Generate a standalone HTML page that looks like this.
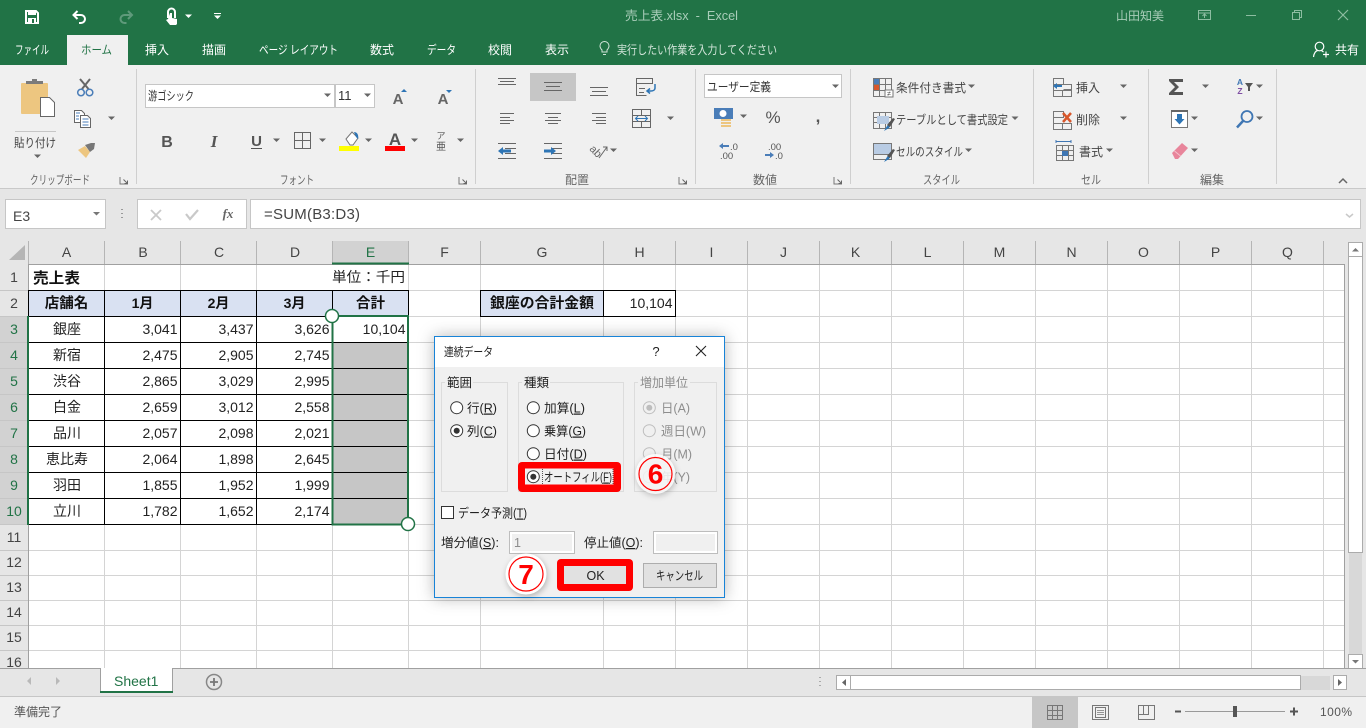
<!DOCTYPE html>
<html lang="ja"><head><meta charset="utf-8"><title>売上表.xlsx - Excel</title>
<style>
html,body{margin:0;padding:0;width:1366px;height:728px;overflow:hidden;background:#f0f0f0}
svg{position:absolute;left:0;top:0;display:block}
text{white-space:pre}
.r{fill:#444;font-size:12px}
.g{fill:#666;font-size:12px}
.w{fill:#fff;font-size:12px}
.c{fill:#222;font-size:14px}
.b{font-weight:bold;fill:#111}
.h{fill:#444;font-size:14px;text-anchor:middle}
.n{text-anchor:end}
.m{text-anchor:middle}
.s{fill:#217346}
.d{fill:#222;font-size:12.500px}
.x{fill:#8d8d8d;font-size:12.500px}
</style></head><body>
<svg width="1366" height="728" viewBox="0 0 1366 728" font-family='"Liberation Sans","Noto Sans CJK JP",sans-serif'>
<defs>
<path id="t" d="M-3.5 -1.5h7l-3.5 3.5z" fill="#666"/>
<g id="l" fill="none" stroke="#777"><path d="M-4.5 -3.5h-0V3.500h8"/><path d="M-1 -1L3 3M3 0V3H0" stroke="#666"/></g>
</defs>

<!-- title & tabs -->
<rect width="1366" height="65" fill="#217346"/>
<rect y="65" width="1366" height="123" fill="#f0f0f0"/>
<rect x="67" y="35" width="61" height="30" fill="#f0f0f0"/>
<!-- QAT -->
<path d="M26 11h10l2 2v10H26z" fill="none" stroke="#fff" stroke-width="2"/><rect x="28" y="11" width="8" height="4" fill="#fff"/><rect x="28" y="18" width="8" height="5" fill="#fff"/><rect x="32" y="19" width="2" height="4" fill="#217346"/>
<path d="M73.500 15H81a4 4 0 0 1 0 8h-2M77.500 11l-4 4 4 4" fill="none" stroke="#fff" stroke-width="2"/>
<path d="M132 15h-7.500a4 4 0 0 0 0 8h2M128 11l4 4-4 4" fill="none" stroke="#5f9a7b" stroke-width="2"/>
<path d="M168 18v-6a3.500 3.500 0 0 1 7 0v6" fill="none" stroke="#fff" stroke-width="2"/><path d="M170 13h2v5l5 1v5l-1 1h-6l-4-5 2-1z" fill="#fff"/>
<path d="M185 14.500h7l-3.500 3.500z" fill="#fff"/>
<path d="M214 13h7v1h-7zM214 15.500h7l-3.500 3.500z" fill="#fff"/>
<text x="625" y="20" fill="#a9cdb9" font-size="12.500" textLength="113" lengthAdjust="spacingAndGlyphs">売上表.xlsx  -  Excel</text>
<text x="1116" y="20" fill="#a9cdb9" font-size="12" textLength="48" lengthAdjust="spacingAndGlyphs">山田知美</text>
<g fill="none" stroke="#8dbda1">
<rect x="1198.500" y="10.500" width="12" height="9"/><path d="M1198 13h13M1204.500 18v-4M1202.500 16l2-2 2 2"/>
<path d="M1246 15.500h10"/>
<path d="M1292.500 12.500h7v7h-7zM1294.500 12.500v-2h7v7h-2"/>
<path d="M1338 10l10 10M1348 10l-10 10" stroke-width="1.200"/>
</g>
<g class="w">
<text class="w" x="15" y="54" textLength="34" lengthAdjust="spacingAndGlyphs">ファイル</text>
<text x="81" y="54" font-size="12" fill="#217346" textLength="31" lengthAdjust="spacingAndGlyphs">ホーム</text>
<text class="w" x="145" y="54">挿入</text>
<text class="w" x="202" y="54">描画</text>
<text class="w" x="259" y="54" textLength="79" lengthAdjust="spacingAndGlyphs">ページ レイアウト</text>
<text class="w" x="370" y="54">数式</text>
<text class="w" x="427" y="54" textLength="29" lengthAdjust="spacingAndGlyphs">データ</text>
<text class="w" x="488" y="54">校閲</text>
<text class="w" x="545" y="54">表示</text>
<text x="617" y="54" font-size="12" fill="#d3e5da" textLength="160" lengthAdjust="spacingAndGlyphs">実行したい作業を入力してください</text>
<text class="w" x="1335" y="54">共有</text>
</g>
<path d="M602 52v-2c-1-1-2-2-2-4a4.500 4.500 0 0 1 9 0c0 2-1 3-2 4v2zM603 54.500h3" fill="none" stroke="#d3e5da"/>
<circle cx="1319.500" cy="46.500" r="4.300" fill="none" stroke="#fff" stroke-width="1.200"/><path d="M1313.500 57c.5-4 2.500-6 4-6.500M1321.500 50.500l2 1.500M1326 51.500v6M1323 54.500h6" fill="none" stroke="#fff" stroke-width="1.200"/>

<!-- ribbon separators -->
<g stroke="#cfcfcf"><path d="M136.500 69v115M475.500 69v115M695.500 69v115M850.500 69v115M1033.500 69v115M1148.500 69v115M1276.500 69v115"/></g>
<g>
<text class="g" x="30" y="184" textLength="60" lengthAdjust="spacingAndGlyphs">クリップボード</text>
<text class="g" x="280" y="184" textLength="34" lengthAdjust="spacingAndGlyphs">フォント</text>
<text class="g" x="565" y="184">配置</text>
<text class="g" x="753" y="184">数値</text>
<text class="g" x="923" y="184" textLength="37" lengthAdjust="spacingAndGlyphs">スタイル</text>
<text class="g" x="1081" y="184" textLength="20" lengthAdjust="spacingAndGlyphs">セル</text>
<text class="g" x="1200" y="184">編集</text>
</g>
<use href="#l" x="124.500" y="180.500"/><use href="#l" x="463.500" y="180.500"/><use href="#l" x="683.500" y="180.500"/><use href="#l" x="838.500" y="180.500"/>
<path d="M1339 183l4-4 4 4" fill="none" stroke="#666" stroke-width="1.500"/>

<!-- clipboard -->
<rect x="21" y="83" width="27" height="31" rx="1" fill="#edc680"/>
<path d="M26 84v-3h6v-2h5v2h6v3z" fill="#7b7b7b"/>
<path d="M40.500 97.500h9l5 5v14h-14z" fill="#fff" stroke="#666"/>
<path d="M15 131.500h41" stroke="#c6c6c6"/>
<text class="r" x="14" y="147" textLength="42" lengthAdjust="spacingAndGlyphs">貼り付け</text>
<use href="#t" x="37.500" y="156"/>
<path d="M80 79l8.500 10M90 79l-8 10" stroke="#666" stroke-width="2" fill="none"/>
<circle cx="81" cy="92.500" r="3.300" fill="none" stroke="#4a7db8" stroke-width="1.500"/><circle cx="89.500" cy="92.500" r="3.300" fill="none" stroke="#4a7db8" stroke-width="1.500"/>
<path d="M74.500 110.500h7l3 3v9h-10z" fill="#fff" stroke="#666"/><path d="M80.500 115.500h7l3 3v9h-10z" fill="#fff" stroke="#666"/>
<path d="M76 113h4M76 116h3M76 119h3M82.500 119h6M82.500 122h6M82.500 125h6" stroke="#4a7db8"/>
<use href="#t" x="111.500" y="118"/>
<path d="M78 150l7-4 5 6-4 6z" fill="#edc680"/><path d="M85 145l6-2 4 0-1 6-4 3z" fill="#777"/>

<!-- font -->
<rect x="145.500" y="84.500" width="189" height="23" fill="#fff" stroke="#c6c6c6"/>
<rect x="335.500" y="84.500" width="39" height="23" fill="#fff" stroke="#c6c6c6"/>
<text x="148" y="100" font-size="12" fill="#333" textLength="46" lengthAdjust="spacingAndGlyphs">游ゴシック</text>
<text x="338" y="100" font-size="13" fill="#333">11</text>
<use href="#t" x="327.500" y="95"/><use href="#t" x="367.500" y="95"/>
<text x="398" y="104" font-size="15" font-weight="bold" fill="#666" text-anchor="middle">A</text><path d="M401 92l3-3 3 3z" fill="#2e75b5"/>
<text x="443" y="104" font-size="15" font-weight="bold" fill="#666" text-anchor="middle">A</text><path d="M446 90h6l-3 3z" fill="#2e75b5"/>
<text x="167" y="147" font-size="16" font-weight="bold" fill="#555" text-anchor="middle">B</text>
<text x="214" y="147" font-size="17" font-weight="bold" font-style="italic" font-family='"Liberation Serif",serif' fill="#555" text-anchor="middle">I</text>
<text x="256.500" y="146" font-size="15" font-weight="bold" fill="#555" text-anchor="middle">U</text><path d="M251 148.500h11" stroke="#555"/>
<use href="#t" x="276.500" y="140"/>
<path d="M294.500 132.500h16v16h-16zM302.500 132.500v16M294.500 140.500h16" fill="none" stroke="#666"/>
<use href="#t" x="322.500" y="140"/>
<path d="M346 139l6-7 6 6-5 7h-3z" fill="#fff" stroke="#777"/><path d="M354 132c3 0 5 3 4 7l-2-2z" fill="#2e75b5"/>
<rect x="339" y="146" width="20" height="5" fill="#ff0"/>
<use href="#t" x="368.500" y="140"/>
<text x="395" y="145" font-size="17" font-weight="bold" fill="#555" text-anchor="middle">A</text>
<rect x="385" y="146" width="20" height="5" fill="#f00"/>
<use href="#t" x="414.500" y="140"/>
<text x="441" y="139" font-size="9" fill="#555" text-anchor="middle">ア</text>
<text x="441" y="150" font-size="10" fill="#555" text-anchor="middle">亜</text>
<use href="#t" x="460.500" y="140"/>

<!-- alignment -->
<rect x="530" y="73" width="46" height="28" fill="#c6c6c6"/>
<g stroke="#666" fill="none">
<path d="M498 78.500h18M500 81.500h14M498 84.500h18"/>
<path d="M544 82.500h18M546 86.500h14M544 90.500h18"/>
<path d="M590 87.500h18M592 91.500h14M590 95.500h18"/>
<path d="M500 113.500h14M500 117.500h10M500 120.500h14M500 123.500h10"/>
<path d="M545 113.500h16M548 117.500h10M545 120.500h16M548 123.500h10"/>
<path d="M592 113.500h14M596 117.500h10M592 120.500h14M596 123.500h10"/>
<path d="M498 143.500h18M505 148.500h11M505 153.500h11M498 158.500h18"/>
<path d="M544 143.500h18M552 148.500h10M552 153.500h10M544 158.500h18"/>
<path d="M636.500 78.500h16v5h-16zM636.500 83.500v12h10M639 88.500h6M639 92.500h5"/>
<path d="M632.500 109.500h18v18h-18zM632.500 115.500h18M632.500 121.500h18M641.500 109.500v6M641.500 121.500v6"/>
</g>
<path d="M655 84v4c0 2-2 3-4 3h-3M650 88.500l-3 2.500 3 2.500" fill="none" stroke="#2e75b5" stroke-width="1.500"/>
<path d="M635.500 118.500h12M638 116l-2.500 2.500 2.500 2.500M645 116l2.500 2.500-2.500 2.500" fill="none" stroke="#2e75b5"/>
<use href="#t" x="670.500" y="118"/>
<path d="M498 151l5-4v2.500h8v3h-8v2.500z" fill="#2e75b5"/>
<path d="M556 151l-5-4v2.500h-7v3h7v2.500z" fill="#2e75b5"/>
<text x="596" y="155" font-size="11" fill="#666" transform="rotate(45 596 151)" text-anchor="middle">ab</text>
<path d="M599 158l8-11M603 147h4v4" fill="none" stroke="#666"/>
<use href="#t" x="613.500" y="150"/>

<!-- number -->
<rect x="704.500" y="74.500" width="137" height="23" fill="#fff" stroke="#c6c6c6"/>
<text x="707" y="91" font-size="12" fill="#333" textLength="64" lengthAdjust="spacingAndGlyphs">ユーザー定義</text>
<use href="#t" x="835.500" y="86"/>
<rect x="714" y="108" width="19" height="11" fill="#4a7db8"/><ellipse cx="723" cy="113.500" rx="3.500" ry="3.500" fill="#fff"/>
<path d="M721 119h10v2h-10zM721 122h10v2h-10zM721 125h10v2h-10z" fill="#edc680"/>
<use href="#t" x="743.500" y="116"/>
<text x="773" y="123" font-size="17" fill="#555" text-anchor="middle">%</text>
<text x="818" y="122" font-size="17" font-weight="bold" fill="#555" text-anchor="middle">,</text>
<text x="730" y="150" font-size="9.500" fill="#555">.0</text><text x="720" y="159" font-size="9.500" fill="#555">.00</text>
<path d="M719 146l4-3v2h6v2h-6v2z" fill="#4a7db8"/>
<text x="768" y="150" font-size="9.500" fill="#555">.00</text><text x="775" y="159" font-size="9.500" fill="#555">.0</text>
<path d="M774 155l-4-3v2h-5v2h5v2z" fill="#4a7db8"/>

<!-- styles -->
<g fill="none" stroke="#777">
<rect x="873.500" y="78.500" width="18" height="18"/><path d="M873.500 84.500h18M873.500 90.500h18M879.500 78.500v18M885.500 78.500v18"/>
<rect x="873.500" y="112.500" width="18" height="16"/><path d="M873.500 117.500h18M873.500 122.500h18M879.500 112.500v16M885.500 112.500v16"/>
<rect x="873.500" y="143.500" width="18" height="16"/><path d="M873.500 148.500h18M873.500 154.500h18"/>
</g>
<rect x="874" y="79" width="5" height="5" fill="#4a7db8"/><rect x="874" y="85" width="5" height="5" fill="#d8572b"/>
<rect x="885" y="90" width="8" height="7" fill="#fff" stroke="#777"/><text x="889" y="96" font-size="7" fill="#444" text-anchor="middle">≠</text>
<rect x="877" y="116" width="12" height="8" fill="#b9cce4"/><path d="M884 131l3-5 6-7 1 1-5 8z" fill="#2e75b5"/><path d="M887 125l6-7 2 1-5 8z" fill="#555"/>
<rect x="874" y="144" width="17" height="10" fill="#b9cce4"/><path d="M884 162l3-5 6-7 1 1-5 8z" fill="#2e75b5"/><path d="M887 156l6-7 2 1-5 8z" fill="#555"/>
<text class="r" x="896" y="92" textLength="70" lengthAdjust="spacingAndGlyphs">条件付き書式</text><use href="#t" x="971.500" y="86"/>
<text class="r" x="896" y="124" textLength="112" lengthAdjust="spacingAndGlyphs">テーブルとして書式設定</text><use href="#t" x="1015" y="118"/>
<text class="r" x="896" y="156" textLength="67" lengthAdjust="spacingAndGlyphs">セルのスタイル</text><use href="#t" x="968.500" y="150"/>

<!-- cells -->
<g fill="none" stroke="#777">
<path d="M1053.500 78.500h10v6h-10zM1053.500 90.500h18v6h-18zM1062.500 90.500v6M1053.500 84.500v6M1063.500 84.500h8v5h-8"/>
<path d="M1053.500 111.500h10v6h-10zM1053.500 123.500h18v6h-18zM1062.500 123.500v6M1053.500 117.500v6"/>
<rect x="1056.500" y="145.500" width="17" height="15"/><path d="M1056.500 150.500h17M1056.500 155.500h17M1062.500 145.500v15M1068.500 145.500v15"/>
</g>
<rect x="1062" y="151" width="6" height="5" fill="#3f76b3"/>
<path d="M1056 141.500h15M1056 140v3M1071 140v3" stroke="#3f76b3" fill="none"/>
<path d="M1053 86l4-3v2h5v2h-5v2z" fill="#2e75b5"/>
<path d="M1063 113l8 9M1071 113l-8 9" stroke="#d8572b" stroke-width="2.500"/>
<text class="r" x="1076" y="92">挿入</text><use href="#t" x="1123.500" y="86"/>
<text class="r" x="1076" y="124">削除</text><use href="#t" x="1123.500" y="118"/>
<text class="r" x="1079" y="156">書式</text><use href="#t" x="1109.500" y="150"/>

<!-- editing -->
<path d="M1169 79h14v3h-9l5 5-5 5h9v3h-14v-2l6-6-6-6z" fill="#555"/>
<use href="#t" x="1205.500" y="86"/>
<text x="1240" y="85" font-size="8.500" font-weight="bold" fill="#3f76b3" text-anchor="middle">A</text>
<text x="1240" y="94" font-size="8.500" font-weight="bold" fill="#7f4fa3" text-anchor="middle">Z</text>
<path d="M1245 83h8l-3 4v4h-2v-4z" fill="#555"/>
<use href="#t" x="1259.500" y="86"/>
<rect x="1171.500" y="110.500" width="16" height="17" fill="#fff" stroke="#777"/><rect x="1171" y="110" width="17" height="2" fill="#666"/>
<path d="M1177 114h5v5h2.500l-5 5.500-5-5.500h2.500z" fill="#2e75b5"/>
<use href="#t" x="1194.500" y="118"/>
<circle cx="1247" cy="116.500" r="5.500" fill="none" stroke="#3f76b3" stroke-width="1.800"/><path d="M1243 121l-6 6.500" stroke="#3f76b3" stroke-width="2.500"/>
<use href="#t" x="1259.500" y="118"/>
<path d="M1172 153l10-10 6 5-10 11h-3z" fill="#e8859b"/><path d="M1174.500 151l6 5" stroke="#f4c2cd"/>
<use href="#t" x="1194.500" y="150"/>

<!-- formula bar -->
<rect y="188" width="1366" height="52" fill="#e6e6e6"/><path d="M0 188.500h1366" stroke="#c9c9c9"/>
<rect x="5.500" y="199.500" width="100" height="29" fill="#fff" stroke="#c6c6c6"/>
<rect x="137.500" y="199.500" width="109" height="29" fill="#fff" stroke="#c6c6c6"/>
<rect x="250.500" y="199.500" width="1110" height="29" fill="#fff" stroke="#c6c6c6"/>
<text x="13" y="221" font-size="14" fill="#444">E3</text>
<path d="M93 212h7l-3.500 3.500z" fill="#777"/>
<path d="M122 209v1M122 213v1M122 217v1" stroke="#999" stroke-width="2"/>
<path d="M151 210l10 10M161 210l-10 10" stroke="#c9c9c9" stroke-width="1.800"/>
<path d="M186 214l4 5 8-9" fill="none" stroke="#c9c9c9" stroke-width="2.200"/>
<text x="228" y="218" font-size="13" font-style="italic" font-weight="bold" font-family='"Liberation Serif",serif' fill="#666" text-anchor="middle">fx</text>
<text x="264" y="219" font-size="15" fill="#444" textLength="96" lengthAdjust="spacing">=SUM(B3:D3)</text>
<path d="M1346 214l3.500 3 3.500-3" fill="none" stroke="#c9c9c9" stroke-width="1.500"/>

<!-- sheet -->
<rect y="240" width="1366" height="428" fill="#e6e6e6"/>
<rect x="28" y="264" width="1316" height="404" fill="#fff"/>
<rect y="316" width="28" height="208" fill="#d2d2d2"/>
<rect x="333" y="241" width="75" height="23" fill="#d2d2d2"/>
<path d="M25 245v15H9z" fill="#b5b5b5"/>
<!-- grid -->
<g stroke="#d4d4d4">
<path d="M104.500 264v404M180.500 264v404M256.500 264v404M332.500 290v378M408.500 264v404M480.500 264v404M603.500 264v404M675.500 264v404M747.500 264v404M819.500 264v404M891.500 264v404M963.500 264v404M1035.500 264v404M1107.500 264v404M1179.500 264v404M1251.500 264v404M1323.500 264v404"/>
<path d="M28 290.500h1316M28 316.500h1316M28 342.500h1316M28 368.500h1316M28 394.500h1316M28 420.500h1316M28 446.500h1316M28 472.500h1316M28 498.500h1316M28 524.500h1316M28 550.500h1316M28 575.500h1316M28 600.500h1316M28 625.500h1316M28 650.500h1316"/>
</g>
<g stroke="#c6c6c6">
<path d="M0 290.500h28M0 316.500h28M0 342.500h28M0 368.500h28M0 394.500h28M0 420.500h28M0 446.500h28M0 472.500h28M0 498.500h28M0 524.500h28M0 550.500h28M0 575.500h28M0 600.500h28M0 625.500h28M0 650.500h28"/>
</g>
<g stroke="#b5b5b5">
<path d="M28.500 241v23M104.500 241v23M180.500 241v23M256.500 241v23M332.500 241v23M408.500 241v23M480.500 241v23M603.500 241v23M675.500 241v23M747.500 241v23M819.500 241v23M891.500 241v23M963.500 241v23M1035.500 241v23M1107.500 241v23M1179.500 241v23M1251.500 241v23M1323.500 241v23"/>
</g>
<path d="M28 264.500h1316M1344.500 264v404M28.500 264v404" stroke="#a0a0a0" fill="none"/>
<!-- fills -->
<rect x="29" y="291" width="379" height="25" fill="#d9e1f2"/>
<rect x="481" y="291" width="122" height="25" fill="#d9e1f2"/>
<rect x="333" y="343" width="75" height="181" fill="#c6c6c6"/>
<!-- black borders -->
<g stroke="#000" fill="none">
<path d="M28 290.500h381M28 316.500h381M28 342.500h381M28 368.500h381M28 394.500h381M28 420.500h381M28 446.500h381M28 472.500h381M28 498.500h381M28 524.500h381"/>
<path d="M104.500 290v235M180.500 290v235M256.500 290v235M332.500 290v235M408.500 290v235"/>
<path d="M28.500 290v27"/>
<rect x="480.500" y="290.500" width="195" height="26"/><path d="M603.500 290v26"/>
</g>
<!-- col headers -->
<text class="h" x="66.500" y="257">A</text><text class="h" x="143" y="257">B</text><text class="h" x="219" y="257">C</text><text class="h" x="295" y="257">D</text>
<text class="h" x="370.500" y="257" style="fill:#217346">E</text><text class="h" x="444.500" y="257">F</text><text class="h" x="542" y="257">G</text><text class="h" x="639.500" y="257">H</text>
<text class="h" x="711.500" y="257">I</text><text class="h" x="783.500" y="257">J</text><text class="h" x="855.500" y="257">K</text><text class="h" x="927.500" y="257">L</text>
<text class="h" x="999.500" y="257">M</text><text class="h" x="1071.500" y="257">N</text><text class="h" x="1143.500" y="257">O</text><text class="h" x="1215.500" y="257">P</text><text class="h" x="1287.500" y="257">Q</text>
<!-- row headers -->
<text class="h" x="14" y="282">1</text><text class="h" x="14" y="308">2</text>
<text class="h" x="14" y="334" style="fill:#217346">3</text><text class="h" x="14" y="360" style="fill:#217346">4</text><text class="h" x="14" y="386" style="fill:#217346">5</text><text class="h" x="14" y="412" style="fill:#217346">6</text>
<text class="h" x="14" y="438" style="fill:#217346">7</text><text class="h" x="14" y="464" style="fill:#217346">8</text><text class="h" x="14" y="490" style="fill:#217346">9</text><text class="h" x="14" y="516" style="fill:#217346">10</text>
<text class="h" x="14" y="542">11</text><text class="h" x="14" y="567">12</text><text class="h" x="14" y="592">13</text><text class="h" x="14" y="617">14</text><text class="h" x="14" y="642">15</text><text class="h" x="14" y="667">16</text>
<!-- cells -->
<text class="c b" x="33" y="283" style="font-size:15px" textLength="47" lengthAdjust="spacingAndGlyphs">売上表</text>
<text class="c" x="332" y="282" textLength="73" lengthAdjust="spacingAndGlyphs">単位：千円</text>
<text class="c b m" x="66.500" y="308" style="font-size:14.500px">店舗名</text>
<text class="c b m" x="142.500" y="308">1月</text><text class="c b m" x="218.500" y="308">2月</text><text class="c b m" x="294.500" y="308">3月</text><text class="c b m" x="370.500" y="308" style="font-size:14.500px">合計</text>
<text class="c b" x="490" y="308" style="font-size:14.500px" textLength="104" lengthAdjust="spacingAndGlyphs">銀座の合計金額</text>
<text class="c n" x="672.500" y="308">10,104</text>
<text class="c n" x="405.500" y="334">10,104</text>
<text class="c m" x="67" y="334">銀座</text><text class="c n" x="177.500" y="334">3,041</text><text class="c n" x="253.500" y="334">3,437</text><text class="c n" x="329.500" y="334">3,626</text>
<text class="c m" x="67" y="360">新宿</text><text class="c n" x="177.500" y="360">2,475</text><text class="c n" x="253.500" y="360">2,905</text><text class="c n" x="329.500" y="360">2,745</text>
<text class="c m" x="67" y="386">渋谷</text><text class="c n" x="177.500" y="386">2,865</text><text class="c n" x="253.500" y="386">3,029</text><text class="c n" x="329.500" y="386">2,995</text>
<text class="c m" x="67" y="412">白金</text><text class="c n" x="177.500" y="412">2,659</text><text class="c n" x="253.500" y="412">3,012</text><text class="c n" x="329.500" y="412">2,558</text>
<text class="c m" x="67" y="438">品川</text><text class="c n" x="177.500" y="438">2,057</text><text class="c n" x="253.500" y="438">2,098</text><text class="c n" x="329.500" y="438">2,021</text>
<text class="c m" x="67" y="464">恵比寿</text><text class="c n" x="177.500" y="464">2,064</text><text class="c n" x="253.500" y="464">1,898</text><text class="c n" x="329.500" y="464">2,645</text>
<text class="c m" x="67" y="490">羽田</text><text class="c n" x="177.500" y="490">1,855</text><text class="c n" x="253.500" y="490">1,952</text><text class="c n" x="329.500" y="490">1,999</text>
<text class="c m" x="67" y="516">立川</text><text class="c n" x="177.500" y="516">1,782</text><text class="c n" x="253.500" y="516">1,652</text><text class="c n" x="329.500" y="516">2,174</text>
<!-- selection -->
<path d="M332 263.500h77" stroke="#217346" stroke-width="2"/>
<path d="M28 316v209" stroke="#217346" stroke-width="2"/>
<rect x="332.500" y="316" width="75.500" height="208.500" fill="none" stroke="#217346" stroke-width="2"/>
<circle cx="332" cy="316" r="6.500" fill="#fff" stroke="#217346" stroke-width="1.500"/>
<circle cx="408" cy="524" r="6.500" fill="#fff" stroke="#217346" stroke-width="1.500"/>
<!-- v scrollbar -->
<rect x="1348.500" y="242.500" width="14" height="14" fill="#fff" stroke="#ababab"/><path d="M1352 251.500h7l-3.500-3.500z" fill="#777"/>
<rect x="1348.500" y="256.500" width="14" height="296" fill="#fff" stroke="#ababab"/>
<rect x="1349" y="553" width="13" height="101" fill="#d8d8d8"/>
<rect x="1348.500" y="654.500" width="14" height="14" fill="#fff" stroke="#ababab"/><path d="M1352 660h7l-3.500 3.500z" fill="#777"/>
<!-- sheet tabs -->
<rect y="668" width="1366" height="29" fill="#e6e6e6"/><path d="M0 668.500h1366" stroke="#a0a0a0"/>
<path d="M100.500 668.500v24M172.500 668.500v24" stroke="#a0a0a0"/>
<rect x="101" y="668" width="71" height="24" fill="#fff"/><rect x="100" y="691" width="73" height="2" fill="#217346"/>
<text x="114" y="686" font-size="14" fill="#217346">Sheet1</text>
<path d="M31 677v8l-4-4zM56 677v8l4-4z" fill="#b9b9b9"/>
<circle cx="214" cy="682" r="7.500" fill="none" stroke="#888" stroke-width="1.500"/><path d="M210 682h8M214 678v8" stroke="#777" stroke-width="1.800"/>
<path d="M820 677v1M820 681v1M820 685v1" stroke="#aaa" stroke-width="2"/>
<rect x="836.500" y="675.500" width="14" height="14" fill="#fff" stroke="#ababab"/><path d="M846 679v7l-4-3.500z" fill="#666"/>
<rect x="850.500" y="675.500" width="450" height="14" fill="#fff" stroke="#ababab"/>
<rect x="1301" y="676" width="29" height="14" fill="#d8d8d8"/>
<rect x="1333.500" y="675.500" width="13" height="14" fill="#fff" stroke="#ababab"/><path d="M1338 679v7l4-3.500z" fill="#666"/>
<!-- status -->
<rect y="697" width="1366" height="31" fill="#f0f0f0"/><path d="M0 696.500h1366" stroke="#c6c6c6"/>
<text x="14" y="716" font-size="12" fill="#555">準備完了</text>
<rect x="1032" y="697" width="46" height="31" fill="#c6c6c6"/>
<g fill="none" stroke="#777">
<path d="M1047.500 705.500h15v14h-15zM1052.500 705.500v14M1057.500 705.500v14M1047.500 710.500h15M1047.500 715.500h15"/>
<rect x="1092.500" y="705.500" width="16" height="14"/><rect x="1095.500" y="707.500" width="10" height="10"/><path d="M1097 710.500h7M1097 712.500h7M1097 714.500h7" stroke-width=".7"/>
<rect x="1138.500" y="705.500" width="16" height="14"/><path d="M1138.500 714.500h10v-9M1143.500 705.500v9"/>
</g>
<path d="M1175 711.500h6M1290 711.500h8M1294 707.500v8" stroke="#555" stroke-width="2"/>
<path d="M1185 711.500h100" stroke="#999"/>
<rect x="1233" y="706" width="4" height="11" fill="#555"/>
<text x="1320" y="716" font-size="12" fill="#555" textLength="32" lengthAdjust="spacing">100%</text>

<!-- dialog -->
<rect x="434.500" y="336.500" width="290" height="261" fill="#f0f0f0" stroke="#1883d7" style="filter:drop-shadow(0 0 8px rgba(0,0,0,.28))"/>
<rect x="435" y="337" width="289" height="30" fill="#fff"/>
<text x="444" y="356" font-size="12" fill="#222" textLength="49" lengthAdjust="spacingAndGlyphs">連続データ</text>
<text x="656" y="356" font-size="13" fill="#222" text-anchor="middle">?</text>
<path d="M696 346l10 10M706 346l-10 10" stroke="#222" stroke-width="1.100"/>
<g fill="none" stroke="#dcdcdc">
<rect x="441.500" y="382.500" width="66" height="109"/>
<rect x="518.500" y="382.500" width="105" height="109"/>
<rect x="634.500" y="382.500" width="82" height="109"/>
</g>
<rect x="445" y="376" width="28" height="12" fill="#f0f0f0"/><rect x="522" y="376" width="28" height="12" fill="#f0f0f0"/><rect x="638" y="376" width="52" height="12" fill="#f0f0f0"/>
<text class="d" x="447" y="387">範囲</text><text class="d" x="524" y="387">種類</text><text class="x" x="640" y="387" textLength="48" lengthAdjust="spacingAndGlyphs">増加単位</text>

<g fill="#fff" stroke="#333">
<circle cx="456.700" cy="407.700" r="6"/><circle cx="456.700" cy="430.700" r="6"/>
<circle cx="533.300" cy="407.700" r="6"/><circle cx="533.300" cy="430.700" r="6"/><circle cx="533.300" cy="453.700" r="6"/>
</g>
<circle cx="456.700" cy="430.700" r="3" fill="#333"/>
<text class="d" x="467" y="412.500" textLength="30" lengthAdjust="spacingAndGlyphs">行(<tspan text-decoration="underline">R</tspan>)</text>
<text class="d" x="467" y="435.500" textLength="30" lengthAdjust="spacingAndGlyphs">列(<tspan text-decoration="underline">C</tspan>)</text>
<text class="d" x="544" y="412.500" textLength="41" lengthAdjust="spacingAndGlyphs">加算(<tspan text-decoration="underline">L</tspan>)</text>
<text class="d" x="544" y="435.500" textLength="42" lengthAdjust="spacingAndGlyphs">乗算(<tspan text-decoration="underline">G</tspan>)</text>
<text class="d" x="544" y="458.500" textLength="43" lengthAdjust="spacingAndGlyphs">日付(<tspan text-decoration="underline">D</tspan>)</text>

<g fill="#f0f0f0" stroke="#bdbdbd">
<circle cx="649.300" cy="407.700" r="6"/><circle cx="649.300" cy="430.700" r="6"/><circle cx="649.300" cy="453.700" r="6"/><circle cx="649.300" cy="476.700" r="6"/>
</g>
<circle cx="649.300" cy="407.700" r="3" fill="#bdbdbd"/>
<text class="x" x="661" y="412.500" textLength="29" lengthAdjust="spacingAndGlyphs">日(A)</text>
<text class="x" x="661" y="435.500" textLength="45" lengthAdjust="spacingAndGlyphs">週日(W)</text>
<text class="x" x="661" y="458.500" textLength="31" lengthAdjust="spacingAndGlyphs">月(M)</text>
<text class="x" x="661" y="481.500" textLength="29" lengthAdjust="spacingAndGlyphs">年(Y)</text>

<!-- red highlight 1 -->
<rect x="518" y="462" width="103" height="30" rx="4" fill="#f00"/>
<rect x="525" y="468.500" width="88.500" height="16" fill="#f0f0f0"/>
<circle cx="533.300" cy="476.700" r="6" fill="#fff" stroke="#333"/><circle cx="533.300" cy="476.700" r="3" fill="#333"/>
<path d="M542.500 469v15M613 469v15" fill="none" stroke="#555" stroke-dasharray="1 1"/>
<text class="d" x="544" y="481.500" textLength="68" lengthAdjust="spacingAndGlyphs">オートフィル(<tspan text-decoration="underline">F</tspan>)</text>

<!-- circle 6 -->
<circle cx="655.500" cy="474" r="20" fill="#fff" fill-opacity=".82" style="filter:drop-shadow(1px 2px 3px rgba(0,0,0,.25))"/>
<circle cx="655.500" cy="474" r="16.500" fill="none" stroke="#f00" stroke-width="1.200"/>
<text x="655.500" y="483.500" font-size="28" font-weight="bold" fill="#f00" text-anchor="middle">6</text>

<rect x="441.500" y="506.500" width="12" height="12" fill="#fff" stroke="#333"/>
<text class="d" x="458" y="517.500" textLength="69" lengthAdjust="spacingAndGlyphs">データ予測(<tspan text-decoration="underline">T</tspan>)</text>
<text class="d" x="441" y="547" textLength="58" lengthAdjust="spacingAndGlyphs">増分値(<tspan text-decoration="underline">S</tspan>):</text>
<rect x="509.500" y="531.500" width="65" height="22" fill="#fff" stroke="#bdbdbd"/>
<rect x="512" y="534" width="60" height="17" fill="#f0f0f0"/>
<text class="x" x="514" y="547">1</text>
<text class="d" x="584" y="547" textLength="59" lengthAdjust="spacingAndGlyphs">停止値(<tspan text-decoration="underline">O</tspan>):</text>
<rect x="653.500" y="531.500" width="64" height="22" fill="#fff" stroke="#bdbdbd"/>
<rect x="656" y="534" width="59" height="17" fill="#f0f0f0"/>

<!-- OK button -->
<rect x="557" y="559" width="76" height="32" rx="4" fill="#f00"/>
<rect x="564" y="566" width="62" height="18" fill="#e1e1e1"/>
<text x="595.500" y="580" font-size="12.500" fill="#222" text-anchor="middle">OK</text>
<rect x="643.500" y="563.500" width="73" height="24" fill="#e1e1e1" stroke="#adadad"/>
<text class="d" x="656" y="580" textLength="47" lengthAdjust="spacingAndGlyphs">キャンセル</text>

<!-- circle 7 -->
<circle cx="526" cy="574" r="20.500" fill="#fff" style="filter:drop-shadow(1px 2px 3px rgba(0,0,0,.25))"/>
<circle cx="526" cy="574" r="17" fill="none" stroke="#f00" stroke-width="1.200"/>
<text x="526" y="584" font-size="28" font-weight="bold" fill="#f00" text-anchor="middle">7</text>
</svg>
</body></html>
